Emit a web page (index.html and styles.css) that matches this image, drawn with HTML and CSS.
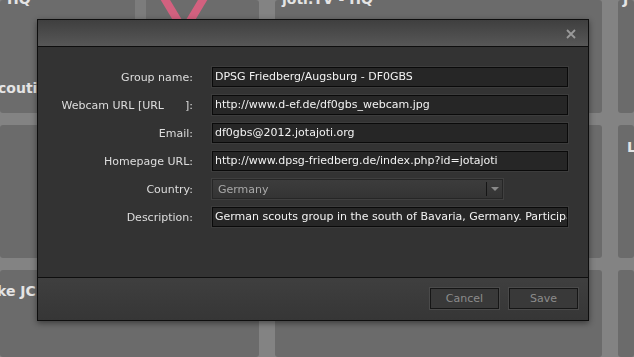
FILE: index.html
```html
<!doctype html>
<html>
<head>
    <meta charset="utf-8">
    <title>Edit group</title>
    <link rel="stylesheet" href="styles.css">
</head>
<body>
    <!-- page behind the dialog -->
    <div class="page">
        <div class="tile tile-a">
            <svg class="logo" width="220" height="30" viewBox="0 0 220 30">
                <rect x="135" y="0" width="11" height="30" fill="#7c7c7c"/>
                <path d="M163 -4 L181 26 M205 -4 L187 26" stroke="#d2617f" stroke-width="8" fill="none"/>
            </svg>
            <p class="t-hq">HQ</p>
            <p class="t-couti">couti</p>
        </div>
        <div class="tile"><p class="t-top">joti.TV - HQ</p></div>
        <div class="tile"><p class="t-top t-j">J</p></div>
        <div class="tile"></div>
        <div class="tile"></div>
        <div class="tile"><p class="t-l">L</p></div>
        <div class="tile"><p class="t-ke">ke JC</p></div>
        <div class="tile"></div>
        <div class="tile"></div>
    </div>

    <div class="dialog">
        <div class="dialog-head">
            <svg class="close" width="10" height="10" viewBox="0 0 10 10">
                <path d="M1 1 L9 9 M9 1 L1 9" stroke="#9a9a9a" stroke-width="1.8"/>
            </svg>
        </div>
        <div class="dialog-body">
            <div class="row">
                <label>Group name:</label>
                <div class="field">DPSG Friedberg/Augsburg - DF0GBS</div>
            </div>
            <div class="row">
                <label>Webcam URL [URL<span class="hole"></span>]:</label>
                <div class="field">http://www.d-ef.de/df0gbs_webcam.jpg</div>
            </div>
            <div class="row">
                <label>Email:</label>
                <div class="field">df0gbs@2012.jotajoti.org</div>
            </div>
            <div class="row">
                <label>Homepage URL:</label>
                <div class="field">http://www.dpsg-friedberg.de/index.php?id=jotajoti</div>
            </div>
            <div class="row">
                <label>Country:</label>
                <div class="select">
                    <span class="select-text">Germany</span>
                    <span class="select-btn"><i class="arrow"></i></span>
                </div>
            </div>
            <div class="row">
                <label>Description:</label>
                <div class="field">German scouts group in the south of Bavaria, Germany. Participating in JOTA/JOTI every year.</div>
            </div>
        </div>
        <div class="dialog-foot">
            <button>Cancel</button>
            <button>Save</button>
        </div>
    </div>
</body>
</html>
```

FILE: styles.css
```css
*{margin:0; padding:0; box-sizing:border-box;}
html,body{width:634px; height:357px; overflow:hidden;}
body{background:#6a6a6a; font-family:"DejaVu Sans", Verdana, sans-serif;}

/* dimmed page */
.page{
    display:grid;
    grid-template-columns:259px 327px 1fr;
    grid-template-rows:113px 133px 1fr;
    column-gap:16px;
    row-gap:12px;
    width:634px;
    height:357px;
    background:#838383;
}
.tile{
    position:relative;
    overflow:hidden;
    background:#6b6b6b;
    border-radius:3px;
    color:#e4e4e4;
    font-weight:bold;
    font-size:14px;
}
.tile-a{background:#6c6c6c;}
.logo{position:absolute; left:0; top:0;}
.t-hq{position:relative; margin:-9px 0 0 7px;}
.t-couti{position:relative; margin:73px 0 0 -2px;}
.t-top{margin:-9px 0 0 7px;}
.t-j{margin-left:5px;}
.t-l{margin:14px 0 0 9px;}
.t-ke{margin:13px 0 0 -3px;}

/* dialog */
.dialog{
    position:fixed;
    left:37px;
    top:19px;
    width:552px;
    height:302px;
    border:1px solid #0e0e0e;
    background:#333;
    box-shadow:0 2px 6px rgba(0,0,0,.45);
    display:flex;
    flex-direction:column;
}
.dialog-head{
    height:27px;
    border-bottom:1px solid #0e0e0e;
    background:linear-gradient(#3f3f3f, #575757);
    display:flex;
    justify-content:flex-end;
    align-items:center;
    padding-right:12px;
}
.close{display:block; margin-top:1px;}
.dialog-body{
    flex:1;
    padding:20px 20px 0 0;
    display:flex;
    flex-direction:column;
    gap:8px;
}
.row{
    display:flex;
    align-items:center;
    height:20px;
}
.row label{
    width:155px;
    margin-right:19px;
    text-align:right;
    font-size:11px;
    color:#dedede;
    white-space:nowrap;
}
.hole{display:inline-block; width:21px;}
.field{
    flex:1;
    height:20px;
    line-height:18px;
    padding-left:2px;
    background:#262626;
    border:1px solid #0a0a0a;
    box-shadow:0 0 0 1px #3c3c3c;
    color:#f2f2f2;
    font-size:11px;
    white-space:nowrap;
    overflow:hidden;
}
.select{
    width:291px;
    height:20px;
    display:flex;
    align-items:center;
    background:linear-gradient(#3c3c3c, #343434);
    border:1px solid #262626;
    box-shadow:0 0 0 1px #404040;
}
.select-text{
    flex:1;
    padding-left:5px;
    font-size:11px;
    color:#a9a9a9;
}
.select-btn{
    width:16px;
    height:14px;
    border-left:1px solid #151515;
    display:flex;
    align-items:center;
    justify-content:center;
}
.arrow{
    width:0;
    height:0;
    border-left:4px solid transparent;
    border-right:4px solid transparent;
    border-top:4px solid #8a8a8a;
}
.dialog-foot{
    height:43px;
    border-top:1px solid #0e0e0e;
    background:linear-gradient(#3f3f3f, #363636);
    display:flex;
    justify-content:flex-end;
    align-items:flex-start;
    gap:10px;
    padding:10px 10px 0 0;
}
.dialog-foot button{
    width:69px;
    height:21px;
    background:#393939;
    border:1px solid #161616;
    box-shadow:0 0 0 1px #4a4a4a;
    color:#8c8c8c;
    font-family:"DejaVu Sans", Verdana, sans-serif;
    font-size:11px;
}
```
